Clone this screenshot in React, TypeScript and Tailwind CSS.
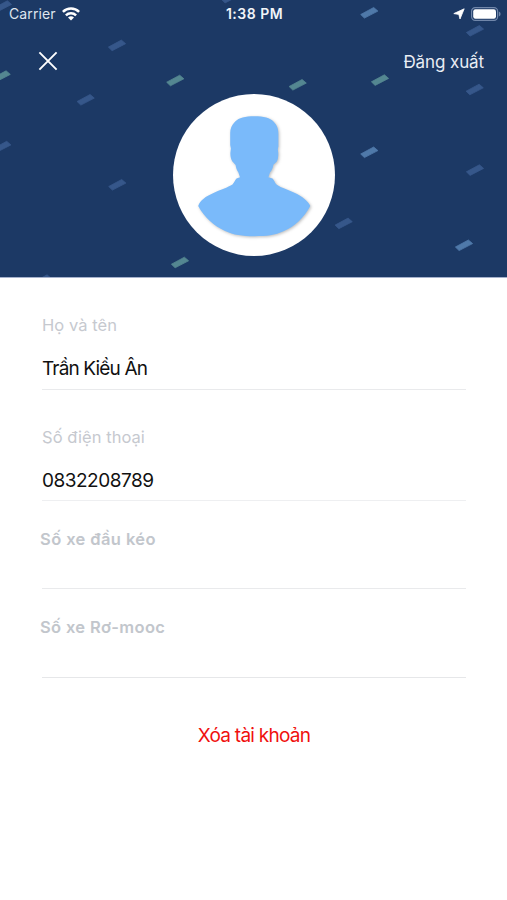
interface Dash {
  x: number;
  y: number;
  color: string;
}

const DIM = "#36578a";
const BLUE = "#4f79a9";
const GREEN = "#548791";

const dashes: Dash[] = [
  { x: 3, y: 6, color: DIM },
  { x: 230, y: -2.5, color: DIM },
  { x: 369.3, y: 12.7, color: BLUE },
  { x: 475, y: 30.7, color: DIM },
  { x: 117, y: 45.3, color: DIM },
  { x: 1.7, y: 76, color: GREEN },
  { x: 175.3, y: 80.4, color: GREEN },
  { x: 297.7, y: 84.7, color: GREEN },
  { x: 380, y: 80, color: GREEN },
  { x: 474.7, y: 89.4, color: DIM },
  { x: 85.7, y: 99.7, color: DIM },
  { x: 2.3, y: 146.5, color: DIM },
  { x: 369.3, y: 152.2, color: BLUE },
  { x: 475, y: 170, color: DIM },
  { x: 117.3, y: 184.7, color: DIM },
  { x: 343.7, y: 223.3, color: DIM },
  { x: 464, y: 245.2, color: BLUE },
  { x: 180, y: 262.4, color: GREEN },
  { x: 42.7, y: 280, color: DIM },
];

function Confetti() {
  return (
    <svg className="absolute inset-0" width="507" height="277" viewBox="0 0 507 277">
      {dashes.map((d) => (
        <polygon
          key={`${d.x}-${d.y}`}
          points="-8.6,1.8 4.4,-5.2 8.6,-1.6 -4.9,5.4"
          transform={`translate(${d.x} ${d.y})`}
          fill={d.color}
          stroke={d.color}
          strokeWidth="0.8"
          strokeLinejoin="round"
        />
      ))}
    </svg>
  );
}

function WifiIcon() {
  return (
    <svg width="18" height="14" viewBox="0 0 18 14" fill="none" stroke="white" strokeWidth="2.5">
      <path d="M0.9 4.9a11.6 11.6 0 0 1 16.2 0" />
      <path d="M3.9 8.3a7.3 7.3 0 0 1 10.2 0" />
      <path d="M9 13.6 6 10.6a4.3 4.3 0 0 1 6 0Z" fill="white" stroke="none" />
    </svg>
  );
}

function StatusBar() {
  return (
    <div className="relative flex h-[27px] items-center justify-between pl-[9px] pr-[6px] text-white">
      <div className="flex w-[160px] items-center gap-[6px]">
        <span className="text-[14px] tracking-[0.1px] text-[#dfe5ee]">Carrier</span>
        <WifiIcon />
      </div>
      <span className="mr-px whitespace-nowrap text-[14px] font-semibold tracking-[0.5px] text-[#f1f4f8]">1:38 PM</span>
      <div className="flex w-[160px] items-center justify-end gap-[6px]">
        <svg width="12" height="12" viewBox="0 0 12 12" fill="white">
          <path d="M11.2 0.8 7 11 5.8 6.4 0.8 5.6Z" stroke="white" strokeWidth="0.8" strokeLinejoin="round" />
        </svg>
        <svg width="30" height="14" viewBox="0 0 30 14">
          <rect x="0.6" y="0.6" width="26" height="12.8" rx="3.6" fill="none" stroke="#7187aa" strokeWidth="1.2" />
          <rect x="2.2" y="2.2" width="22.8" height="9.6" rx="2.2" fill="white" />
          <path d="M27.9 4.6q1.7 0.8 1.7 2.4t-1.7 2.4Z" fill="#7187aa" />
        </svg>
      </div>
    </div>
  );
}

function Avatar() {
  return (
    <div className="relative mx-auto mt-[9px] size-[162px] rounded-full bg-white">
      <svg className="overflow-visible" width="162" height="162" viewBox="173 94 162 162">
        <path
          className="drop-shadow-[1.5px_1.5px_1.5px_rgba(0,0,0,0.26)]"
          fill="#7abafa"
          d="M254.3 116.3C264 116.3 270 117.8 273.7 121.8C277.3 125.7 278.4 129 278.4 134V146.5L277.8 149L278.3 153.5C278.3 157.5 277.8 160.5 276.5 162L273.4 164.8C273 168 271.8 170.5 270 172.6L268.4 177.3L272.5 178.5C274 179.5 274.7 183 276.8 184.8C281.5 187.8 288 190 295 193C302 196 308.5 201.5 310.3 206C304 217.5 295 226.5 283.5 231.3C275 235.3 267 236.2 254.5 236.2C242 236.2 233.5 235 225 231C213.5 225.5 204.5 217.5 198.2 206C200 200.5 206 196 213 193.2C220 190 228 187.5 232.5 184.6C234.5 182.5 235 179.8 236.5 178.6L240 177.3L238.4 172.6C236.8 170 236 168 235.6 165L232.2 161.3C230.8 158.5 230.2 156 230.4 152.5L230.9 148.5L230.2 145V133C230.2 129 231.6 125 235.2 121.6C239 117.8 245 116.3 254.3 116.3Z"
        />
      </svg>
    </div>
  );
}

export default function App() {
  return (
    <main className="h-[900px] w-[507px] overflow-hidden bg-white font-['Inter','Noto_Sans',sans-serif]">
      <header className="relative h-[278px] overflow-hidden border-b border-[#a5b1cc] bg-[#1c3965]">
        <Confetti />
        <StatusBar />
        <div className="relative mt-[10px] flex h-12 items-center justify-between pl-[38px] pr-[23px]">
          <button type="button" aria-label="Close">
            <svg width="20" height="20" viewBox="0 0 20 20" fill="none" stroke="white" strokeWidth="1.9">
              <path d="m1.4 1.4 17.2 17.2M18.6 1.4 1.4 18.6" />
            </svg>
          </button>
          <button type="button" className="pt-1 text-[17px] tracking-[-0.1px] text-[#e9edf4]">
            Đăng xuất
          </button>
        </div>
        <Avatar />
      </header>

      <section className="flex flex-col pl-[42px] pr-[41px]">
        <div className="mt-[35px] h-[77px] border-b border-[#e9eaec]">
          <p className="h-6 text-[16.5px] leading-6 tracking-[0.05px] text-[#c6c9cf]">Họ và tên</p>
          <p className="mt-[18px] text-[19px] leading-7 tracking-[-0.85px] text-[#111]">Trần Kiều Ân</p>
        </div>
        <div className="mt-[35px] h-[76px] border-b border-[#eeeff1]">
          <p className="h-6 text-[16.5px] leading-6 tracking-[0.05px] text-[#c6c9cf]">Số điện thoại</p>
          <p className="mt-[18px] text-[19px] leading-7 tracking-[-0.5px] text-[#111]">0832208789</p>
        </div>
        <div className="mt-[26px] h-[62px] border-b border-[#e9eaec]">
          <p className="-ml-[2px] text-[16.5px] font-semibold leading-6 tracking-[0.4px] text-[#c2c6cc]">Số xe đầu kéo</p>
        </div>
        <div className="mt-[26px] h-[63px] border-b border-[#e6e7e9]">
          <p className="-ml-[2px] text-[16.5px] font-semibold leading-6 tracking-[0.35px] text-[#c2c6cc]">Số xe Rơ-mooc</p>
        </div>
        <button type="button" className="mt-[44px] text-[19px] leading-7 tracking-[-0.75px] text-[#f0100e]">
          Xóa tài khoản
        </button>
      </section>
    </main>
  );
}
